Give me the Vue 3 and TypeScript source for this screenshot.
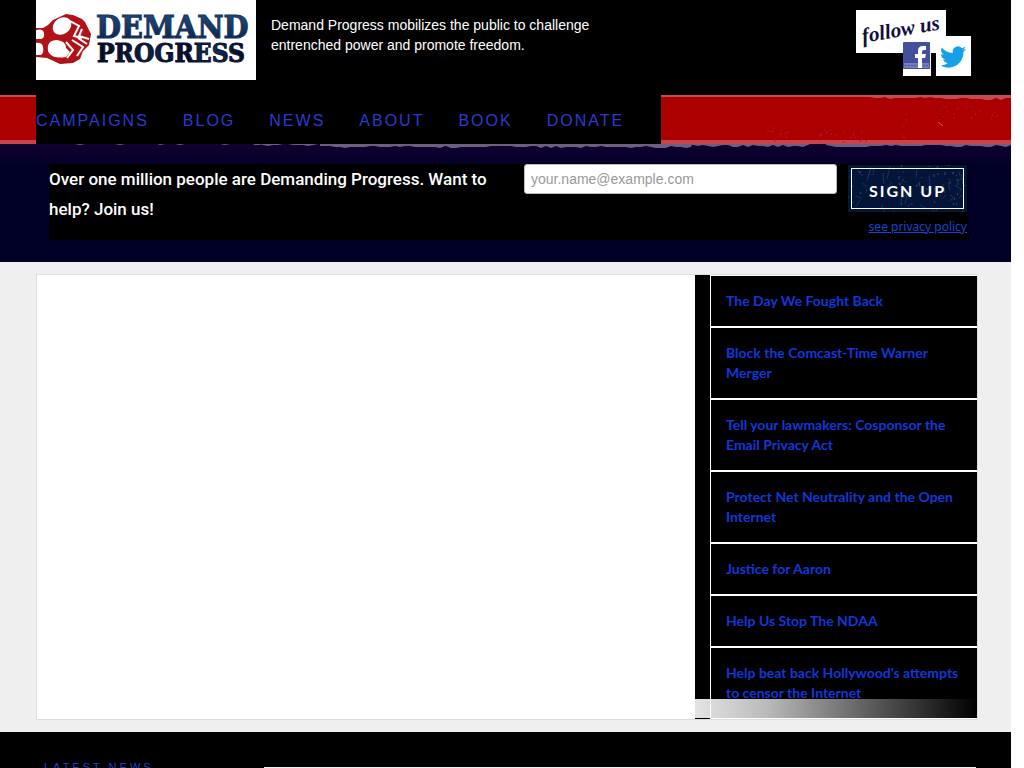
<script setup lang="ts">
const navItems: string[] = ['Campaigns', 'Blog', 'News', 'About', 'Book', 'Donate']

const campaigns: string[] = [
  'The Day We Fought Back',
  'Block the Comcast-Time Warner Merger',
  'Tell your lawmakers: Cosponsor the Email Privacy Act',
  'Protect Net Neutrality and the Open Internet',
  'Justice for Aaron',
  'Help Us Stop The NDAA',
  "Help beat back Hollywood's attempts to censor the Internet",
]

// Small deterministic generator for the worn print texture
function noise(seed: number): () => number {
  let s = seed
  return () => {
    s = (s * 16807) % 2147483647
    return s / 2147483647
  }
}

function scratches(seed: number, count: number, x: number, y: number, w: number, h: number, len: number): string {
  const r = noise(seed)
  let d = ''
  for (let i = 0; i < count; i++) {
    d += `M${Math.round(x + r() * w)} ${Math.round(y + r() * h)}l${Math.round((r() - 0.5) * len)} ${Math.round(r() * len)}`
  }
  return d
}

function tornEdge(seed: number, from: number, to: number, thick: number): string {
  const r = noise(seed)
  let d = `M${from} 0`
  for (let x = from; x <= to; x += 5) {
    d += `L${x} ${thick + Math.round(r() * 2 - 1)}`
  }
  return d + `L${to} 0Z`
}

const redFlecks =
  scratches(71, 14, 768, 30, 20, 14, 3) +
  scratches(19, 24, 820, 34, 46, 12, 3) +
  scratches(37, 8, 902, 16, 6, 28, 3) +
  scratches(53, 22, 940, 10, 60, 14, 2)
const redTop = tornEdge(11, 870, 940, 3) + tornEdge(23, 936, 1011, 4)
const blueTop =
  tornEdge(5, 70, 260, 0) + tornEdge(5, 258, 324, 1) + tornEdge(8, 320, 450, 3) + tornEdge(29, 446, 692, 3) + tornEdge(31, 688, 810, 2) + tornEdge(41, 826, 1011, 2)
const buttonMarks = scratches(97, 34, 0, 0, 119, 47, 14)
const buttonDust = scratches(43, 60, 0, 0, 119, 47, 3)
</script>

<template>
  <div class="page">
    <header class="header">
      <div class="wrap header-row">
        <a class="logo" href="#" aria-label="Demand Progress">
          <svg width="220" height="80" viewBox="0 0 220 80" role="img" aria-hidden="true">
            <defs>
              <linearGradient id="ink" x1="0" y1="0" x2="0" y2="1">
                <stop offset="0" stop-color="#24507e" />
                <stop offset="1" stop-color="#0b1d44" />
              </linearGradient>
              <linearGradient id="ink2" x1="0" y1="0" x2="1" y2="0">
                <stop offset="0" stop-color="#050923" />
                <stop offset=".4" stop-color="#0d2144" />
                <stop offset=".62" stop-color="#070b29" />
                <stop offset=".75" stop-color="#0d3a63" />
                <stop offset="1" stop-color="#050820" />
              </linearGradient>
            </defs>
            <path fill="#b01218" d="M0 28L7 28Q13 25 17 20L30 14L37 15L46 19Q50 22 51 26L55 34L53 45L47 51L44 59L37 63L24 64L11 58L0 57Z" />
            <g fill="#fff">
              <path d="M0 30Q7 28 8 33Q9 38 5 39L0 39Z" />
              <path d="M0 43Q6 42 7 47Q8 53 5 55L0 55Z" />
              <ellipse cx="26" cy="26" rx="10" ry="8" transform="rotate(-36 26 26)" />
              <path d="M12 46Q13 40 21 40Q30 41 30 48L34 52L30 57Q18 59 14 54Q11 51 12 46Z" />
            </g>
            <g fill="none" stroke="#fff" stroke-width="2" stroke-linejoin="miter">
              <path d="M34 21L43 26L38 36L46 38" />
              <path d="M30 42L37 50L31 58M36 40L47 47L41 56" />
              <path d="M46 29L43 36L53 39M42 38L51 44" />
            </g>
            <text class="logo-text" x="60" y="38" font-size="32" fill="url(#ink)" stroke="#153564">DEMAND</text>
            <text class="logo-text" x="61" y="62" font-size="26" fill="url(#ink2)" stroke="#09112f">PROGRESS</text>
          </svg>
        </a>
        <p class="tagline">Demand Progress mobilizes the public to challenge entrenched power and promote freedom.</p>
        <div class="social">
          <div class="follow">
            <svg width="90" height="43" viewBox="0 0 90 43" aria-label="follow us" role="img">
              <text class="script-text" x="7" y="33" font-size="21" transform="rotate(-10 7 33)">follow us</text>
            </svg>
          </div>
          <a class="facebook" href="#" aria-label="Facebook">
            <svg width="28" height="34" viewBox="0 0 28 34" aria-hidden="true">
              <rect width="27" height="27" rx="1" fill="#43509b" />
              <path fill="#7480b7" d="M1 21H26V26H1Z" />
              <path fill="none" stroke="#4a569d" stroke-dasharray="2 1" d="M2 23.5H26" />
              <path fill="#fff" d="M15 26V16H12V12H15V9Q15 4 20 4H23V8H21Q19 8 19 10V12H23L22 16H19V26Z" />
            </svg>
          </a>
          <a class="twitter" href="#" aria-label="Twitter">
            <svg width="35" height="40" viewBox="0 0 35 40" aria-hidden="true">
              <path fill="#16a0e8" transform="translate(4 8) scale(1.09)" d="M23.95 4.57a10 10 0 01-2.82.77 4.96 4.96 0 002.16-2.72c-.95.55-2 .96-3.13 1.18a4.92 4.92 0 00-8.38 4.48C7.69 8.1 4.07 6.13 1.64 3.16a4.92 4.92 0 001.52 6.57 4.9 4.9 0 01-2.23-.61v.06a4.92 4.92 0 003.95 4.83 5 5 0 01-2.21.08 4.94 4.94 0 004.6 3.42A9.87 9.87 0 010 19.54a14 14 0 007.55 2.21c9.05 0 14-7.5 14-13.98l-.02-.64A9.94 9.94 0 0024 4.59z" />
            </svg>
          </a>
        </div>
      </div>
    </header>

    <div class="nav-band">
      <svg class="texture" aria-hidden="true">
        <path :d="redTop" fill="#c44a56" />
        <path :d="redFlecks" stroke="#b8123a" fill="none" />
        <path d="M938 27l5 4" stroke="#d7505c" fill="none" />
      </svg>
      <div class="wrap">
        <nav class="nav" aria-label="Main">
          <a v-for="item in navItems" :key="item" href="#">{{ item }}</a>
        </nav>
      </div>
    </div>

    <section class="signup">
      <svg class="texture" aria-hidden="true">
        <path :d="blueTop" fill="#69617f" />
      </svg>
      <form class="signup-form" @submit.prevent>
        <label class="pitch" for="email">Over one million people are Demanding Progress. Want to help? Join us!</label>
        <input id="email" class="email" type="email" placeholder="your.name@example.com" />
        <div class="actions">
          <button class="join" type="submit">
            <svg class="texture" aria-hidden="true">
              <path :d="buttonMarks" stroke="#1c3259" fill="none" />
              <path :d="buttonDust" stroke="#344769" fill="none" />
            </svg>
            <span>Sign up</span>
          </button>
          <a class="privacy" href="#">see privacy policy</a>
        </div>
      </form>
    </section>

    <main class="main">
      <div class="panel">
        <div class="stage"></div>
        <ul class="campaigns">
          <li v-for="title in campaigns" :key="title"><a href="#">{{ title }}</a></li>
        </ul>
      </div>
    </main>

    <footer class="footer">
      <h2><a href="#">Latest News</a></h2>
      <div class="news"></div>
    </footer>
  </div>
</template>

<style>
body {
  margin: 0;
  background: #fff;
}
</style>

<style scoped>
.page {
  height: 100vh;
  margin-right: 13px;
  overflow: hidden;
  display: flex;
  flex-direction: column;
  background: #000;
  font-family: "Liberation Sans", Arial, sans-serif;
}
.page > * {
  flex-shrink: 0;
}
.wrap {
  padding: 0 33px 0 36px;
}
.texture {
  position: absolute;
  inset: 0;
  width: 100%;
  height: 100%;
}
.header {
  height: 95px;
  color: #fff;
}
.header-row {
  display: flex;
  align-items: flex-start;
}
.logo {
  height: 80px;
  background: #fff;
}
.logo svg,
.social svg {
  display: block;
}
.logo-text {
  font-family: "DejaVu Serif Condensed", "DejaVu Serif", serif;
  font-weight: 700;
  stroke-width: 1px;
}
.tagline {
  width: 350px;
  margin: 15px 0 0 15px;
  font-size: 14px;
  line-height: 20px;
}
.social {
  position: relative;
  width: 115px;
  height: 66px;
  margin: 10px 7px 0 auto;
}
.follow,
.facebook,
.twitter {
  position: absolute;
  background: #fff;
}
.follow {
  left: 0;
  top: 0;
}
.facebook {
  left: 47px;
  bottom: 0;
}
.twitter {
  right: 0;
  bottom: 0;
}
.script-text {
  font-family: "Liberation Serif", serif;
  font-style: italic;
  font-weight: 700;
  fill: #10103a;
}
.nav-band {
  position: relative;
  box-sizing: border-box;
  height: 49px;
  background: linear-gradient(#c44a56 2px, #ac0000 2px, #ac0000 45px, #c8444c 45px);
}
.nav {
  position: relative;
  display: inline-flex;
  padding: 2px 3px 0 0;
  background: #000;
}
.nav a {
  padding-right: 34px;
  font-size: 16px;
  line-height: 47px;
  letter-spacing: 2px;
  text-transform: uppercase;
  text-decoration: none;
  color: #2a3bd0;
}
.signup {
  position: relative;
  box-sizing: border-box;
  height: 118px;
  padding: 20px 43px 22px 49px;
  background: linear-gradient(#130030, #000026 22px);
}
.signup-form {
  position: relative;
  display: grid;
  grid-template-columns: 475fr 324fr 119px;
  align-items: start;
  height: 76px;
  padding-right: 1px;
  background: #000;
}
.pitch {
  padding-right: 24px;
  color: #fff;
  font-family: Roboto, sans-serif;
  font-size: 17px;
  font-weight: 500;
  line-height: 30px;
}
.email {
  box-sizing: border-box;
  height: 30px;
  margin-right: 11px;
  padding: 4px 6px;
  border: 1px solid #bbb;
  border-radius: 3px;
  background: #fff;
  font: 14px/20px "Liberation Sans", Arial, sans-serif;
}
.email::placeholder {
  color: #999;
}
.actions {
  display: flex;
  flex-direction: column;
  align-items: flex-end;
}
.join {
  position: relative;
  width: 119px;
  height: 47px;
  margin: 1px 0 0;
  padding: 3px;
  border: 0;
  background: #031539;
  color: #fff;
}
.join span {
  position: relative;
  display: block;
  padding-top: 4px;
  border: 1px solid #fff;
  font: 700 16px/35px Lato, sans-serif;
  letter-spacing: 2px;
  text-transform: uppercase;
}
.privacy {
  margin-top: 7px;
  font: 12px/16px "Noto Sans", sans-serif;
  color: #1246d6;
}
.main {
  padding: 12px 33px 12px 36px;
  background: #efefef;
}
.panel {
  position: relative;
  display: flex;
  border: 1px solid #ddd;
  background: #000;
}
.panel::after {
  content: "";
  position: absolute;
  right: 0;
  bottom: 1px;
  width: 282px;
  height: 19px;
  background: linear-gradient(#fff, #fff) 15px 0 / 1px 100% no-repeat, linear-gradient(90deg, #e4e4e4, #bbb 25%, #555 65%, #000);
}
.stage {
  flex: 1;
  margin-right: 15px;
  background: #fff;
}
.campaigns {
  box-sizing: border-box;
  width: 267px;
  margin: 0;
  padding: 1px 0 1px 1px;
  list-style: none;
  background: #fff;
}
.campaigns li {
  padding: 15px 10px 15px 15px;
  background: #000;
  font: 700 14px/20px Lato, sans-serif;
}
.campaigns li + li {
  margin-top: 2px;
}
.campaigns a {
  color: #0f38d8;
  text-decoration: none;
}
.footer {
  display: flex;
  align-items: flex-start;
  padding: 26px 35px 0 44px;
}
.footer h2 {
  width: 220px;
  margin: 0;
  font-size: 11px;
  font-weight: 400;
  line-height: 18px;
  letter-spacing: 3px;
  text-transform: uppercase;
}
.footer a {
  color: #1a43c8;
  text-decoration: none;
}
.news {
  flex: 1;
  height: 120px;
  margin-top: 9px;
  background: #eee;
}
</style>
